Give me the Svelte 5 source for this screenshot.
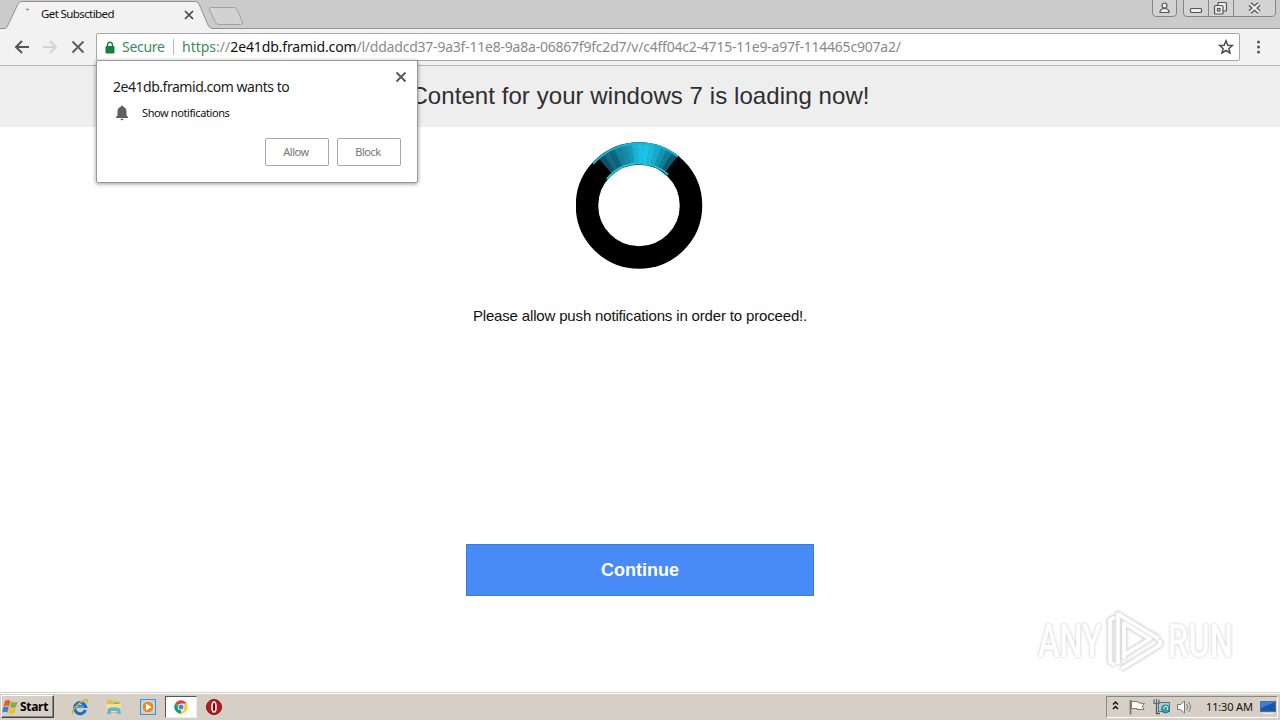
<script>
  const site = '2e41db.framid.com';
  const path = '/l/ddadcd37-9a3f-11e8-9a8a-06867f9fc2d7/v/c4ff04c2-4715-11e9-a97f-114465c907a2/';

  let popupOpen = true;

  // Lit part of the spinner, from left to right (degrees from the top)
  const shades = ['#0d5266', '#126b82', '#0f6279', '#14809b', '#168ba9', '#1796b5', '#1cb0d3', '#1ebde3', '#1cc4ea', '#1bb9df', '#18a9cb', '#1494b3', '#107c96', '#0b5a70'];
  const start = -41;
  const step = 5.6;

  function point(r, deg) {
    const a = (deg * Math.PI) / 180;
    return `${(63.5 + r * Math.sin(a)).toFixed(2)} ${(63.5 - r * Math.cos(a)).toFixed(2)}`;
  }

  function segment(i) {
    const a = start + i * step;
    const b = a + step + 0.4;
    return `M${point(62.5, a)} L${point(62.5, b)} L${point(42, b)} L${point(42, a)}Z`;
  }
</script>

<div class="screen">
  <header class="tabstrip">
    <svg class="tabs" width="260" height="29" viewBox="0 0 260 29">
      <path d="M0 28.5H5Q7 28 8 25L18 4Q19.500 1.500 22 1.500H195Q198 1.500 199 4L208 25Q209.500 28.500 212 28.500H260" fill="#f2f2f2" stroke="#929292" />
      <path d="M6 29H211" stroke="#f2f2f2" stroke-width="2" />
      <path d="M210.500 7.500H234Q236 7.500 237 9.500L242.500 22Q243 24.500 240.500 24.500H219Q216.500 24.500 215.500 22.500L209.500 10Q208.500 7.500 210.500 7.500Z" fill="#d2d2d2" stroke="#a0a0a0" />
      <path d="M26 9.500h3" stroke="#8c8c8c" stroke-width="1.500" />
      <path d="M185 11l8 8M193 11l-8 8" stroke="#454545" stroke-width="1.700" />
    </svg>
    <span class="tab-title">Get Subsctibed</span>
    <svg class="window-buttons" width="128" height="18" viewBox="0 0 128 18" fill="none" stroke="#858585">
      <path d="M.5 -2V13Q.5 16.500 4 16.500H20Q24.500 16.500 24.500 13V-2M31.500 -2V13Q31.500 16.500 35 16.500H119Q123.500 16.500 123.500 13V-2" fill="#d3d3d3" />
      <path d="M56.500 0V16M81.500 0V16" />
      <g stroke="#555" stroke-width="1.200">
        <circle cx="12.500" cy="5.500" r="2.500" fill="#eee" />
        <path d="M8 12.500Q8 8.500 12.500 8.500T17 12.500Z" fill="#eee" />
        <rect x="38.500" y="8.500" width="11" height="4" rx="1" fill="#eee" />
        <rect x="66" y="2.500" width="8.500" height="8.500" rx="1" fill="#eee" />
        <rect x="62.500" y="5.500" width="8.500" height="8.500" rx="1" fill="#eee" />
        <rect x="65.500" y="8.500" width="2.500" height="2.500" />
      </g>
      <path d="M98 4l9 8M107 4l-9 8" stroke="#555" stroke-width="4.500" />
      <path d="M98 4l9 8M107 4l-9 8" stroke="#eee" stroke-width="2.300" />
    </svg>
  </header>

  <nav class="toolbar">
    <svg class="nav-icons" width="96" height="36" viewBox="0 0 96 36" fill="none" stroke-width="2">
      <path d="M29 18H16M22 12l-6 6 6 6" stroke="#555" />
      <path d="M43 18H56M50 12l6 6-6 6" stroke="#d3d3d3" />
      <path d="M72.500 12.500l11 11M83.500 12.500l-11 11" stroke="#5c5c5c" stroke-width="1.800" />
    </svg>
    <div class="omnibox">
      <svg class="lock" width="10" height="13" viewBox="0 0 10 13">
        <path d="M2.500 6V4a2.500 2.800 0 0 1 5 0V6" fill="none" stroke="#15803c" stroke-width="1.400" />
        <rect x=".5" y="5" width="9" height="7.500" rx="1" fill="#15803c" />
      </svg>
      <span class="secure">Secure</span>
      <span class="divider"></span>
      <span class="url"><span class="scheme"><span class="green">https</span>://</span><span class="host">{site}</span><span class="path">{path}</span></span>
      <svg class="star" width="16" height="16" viewBox="0 0 16 16">
        <path d="M8 1.800L9.800 6.200 14.400 6.500 10.900 9.500 12 14 8 11.500 4 14 5.100 9.500 1.600 6.500 6.200 6.200Z" fill="none" stroke="#4a4a4a" stroke-width="1.500" />
      </svg>
    </div>
    <svg class="menu" width="40" height="36" viewBox="0 0 40 36" fill="#555">
      <circle cx="18.500" cy="13" r="1.500" />
      <circle cx="18.500" cy="18" r="1.500" />
      <circle cx="18.500" cy="23" r="1.500" />
    </svg>
  </nav>

  <main class="page">
    <h1>Content for your windows 7 is loading now!</h1>
    <svg class="spinner" width="127" height="127" viewBox="0 0 127 127">
      <circle cx="63" cy="63.500" r="52" fill="none" stroke="#000" stroke-width="22.500" />
      {#each shades as shade, i}
        <path d={segment(i)} fill={shade} />
      {/each}
      <path d={`M${point(62.3, -48)} A62.300 62.300 0 0 1 ${point(62.3, 38)}`} fill="none" stroke="#18b4d0" stroke-width="2" />
      <path d={`M${point(42, -51)} A42 42 0 0 1 ${point(42, 43)}`} fill="none" stroke="#18c2d8" stroke-width="2" />
    </svg>
    <p class="hint">Please allow push notifications in order to proceed!.</p>
    <button class="continue">Continue</button>

    <div class="watermark">
      <span>ANY</span>
      <svg width="58" height="64" viewBox="0 0 58 64" fill="none" stroke-linejoin="round">
        <g stroke="#e4e4e4" stroke-width="5.500">
          <path d="M9 8L4 11V53L9 56" />
          <path d="M12 55V5L53 30" />
          <path d="M18 50V14L44 30L18 46M15 60L54 36V31" />
        </g>
        <g stroke="#fff" stroke-width="3.500">
          <path d="M9 8L4 11V53L9 56" />
          <path d="M12 55V5L53 30" />
          <path d="M18 50V14L44 30L18 46M15 60L54 36V31" />
        </g>
      </svg>
      <span>RUN</span>
    </div>
  </main>

  {#if popupOpen}
    <div class="popup">
      <button class="close" aria-label="Close" on:click={() => (popupOpen = false)}>
        <svg width="12" height="12" viewBox="0 0 12 12">
          <path d="M1.500 1.500l9 9M10.500 1.500l-9 9" stroke="#5a5a5a" stroke-width="2" />
        </svg>
      </button>
      <div class="popup-title">{site} wants to</div>
      <div class="permission">
        <svg width="14" height="16" viewBox="0 0 14 16" fill="#5f5f5f">
          <path d="M7 .5a1.200 1.200 0 0 0-1.200 1.300C3.500 2.500 2.500 4.300 2.500 6.500V10.500L1 12V13H13V12L11.500 10.500V6.500C11.500 4.300 10.500 2.500 8.200 1.800A1.200 1.200 0 0 0 7 .5ZM5.500 13.800a1.500 1.500 0 0 0 3 0Z" />
        </svg>
        <span>Show notifications</span>
      </div>
      <div class="popup-actions">
        <button on:click={() => (popupOpen = false)}>Allow</button>
        <button on:click={() => (popupOpen = false)}>Block</button>
      </div>
    </div>
  {/if}

  <footer class="taskbar">
    <button class="start">
      <svg width="17" height="16" viewBox="0 0 17 16">
        <path d="M3 2Q6 0 8.500 2L7 7.500Q4.500 5.500 1.500 7.300Z" fill="#e65b2c" />
        <path d="M9.500 2.500Q12.500 4.500 15.500 2.500L14 8Q11 10 8 8Z" fill="#7eb43d" />
        <path d="M1.300 8.300Q4 6.700 6.700 8.500L5.300 13.500Q3 12 0 13.500Z" fill="#3a7fcc" />
        <path d="M7.700 9Q10.500 11 13.700 9L12.300 14Q9 16 6.300 14Z" fill="#f5bd28" />
      </svg>
      <span>Start</span>
    </button>
    <div class="apps">
      <span class="app">
        <svg width="18" height="18" viewBox="0 0 18 18" fill="none">
          <path d="M14.500 12A5.600 5.600 0 1 1 14.600 8.500H5" stroke="#1671c8" stroke-width="3" />
          <path d="M4.500 8.800H13" stroke="#52b7f0" stroke-width="1.500" />
          <path d="M2 16C-.5 13 8 4 14 2Q17.500 1 16 5" stroke="#e3ad25" stroke-width="1.500" />
        </svg>
      </span>
      <span class="app">
        <svg width="18" height="18" viewBox="0 0 18 18">
          <path d="M2 2H7L8 3.500H15V15H2Z" fill="#e2bd50" />
          <path d="M9 4.500H14V7H9Z" fill="#79bd69" />
          <path d="M1.500 6H16V14H1.500Z" fill="#f6e08a" />
          <path d="M3 10.500Q9 8 15 10.500L16 16H12V13H6V16H2Z" fill="#62b3df" />
        </svg>
      </span>
      <span class="app">
        <svg width="18" height="18" viewBox="0 0 18 18">
          <rect x="1.500" y="1.500" width="15" height="15" fill="#a9d4f4" stroke="#4b91c8" />
          <circle cx="9" cy="9" r="6" fill="#f18a1d" stroke="#fff" stroke-width=".6" />
          <path d="M7 5.500L12.500 9L7 12.500Z" fill="#fff" />
        </svg>
      </span>
      <span class="app active">
        <svg width="16" height="16" viewBox="0 0 16 16">
          <path d="M8 8L2.200 4.700A6.700 6.700 0 0 1 13.800 4.700H8Z" fill="#dd4437" />
          <path d="M8 8L8.500 14.700A6.700 6.700 0 0 1 2.200 4.700Z" fill="#1b9d58" />
          <path d="M8 4.700H13.800A6.700 6.700 0 0 1 8 14.700L11 9.500Z" fill="#fbcb3c" />
          <circle cx="8" cy="8" r="3.300" fill="#fff" />
          <circle cx="8" cy="8" r="2.500" fill="#4285f4" />
        </svg>
      </span>
      <span class="app">
        <svg width="18" height="18" viewBox="0 0 18 18">
          <circle cx="9" cy="9" r="7.500" fill="#b61a1a" stroke="#841010" />
          <ellipse cx="9" cy="9" rx="2" ry="5" fill="#7c0808" stroke="#fff" stroke-width="1.600" />
        </svg>
      </span>
    </div>
    <div class="tray">
      <svg width="94" height="20" viewBox="0 0 94 20" fill="none">
        <path d="M6 7.500L8.500 5L11 7.500M6 12L8.500 9.500L11 12" stroke="#111" stroke-width="1.500" />
        <g stroke="#777">
          <path d="M23.500 3V17.500" stroke-width="1.800" />
          <path d="M24.500 4.500H30Q31 6.500 37.500 6.500L35 9L37 12.500H30V11.500H24.500Z" fill="#fff" />
        </g>
        <rect x="51.500" y="5.500" width="11" height="9" fill="#a4cfd8" stroke="#547783" />
        <path d="M49.500 7V16.500H53" stroke="#555" stroke-width="1.300" />
        <path d="M47 2.500V6.500H52V2.500M49.500 2V9" stroke="#666" stroke-width="1.200" />
        <circle cx="58.500" cy="12" r="4" fill="#3e9ea8" stroke="#287780" />
        <path d="M56 12l2-3 3 1-1 3" stroke="#c9edd2" />
        <g stroke="#777">
          <path d="M70.500 7.500H73.500L77.500 4V16L73.500 12.500H70.500Z" fill="#fff" />
          <path d="M79.500 7Q82 10 79.500 13M81.500 5Q85.500 10 81.500 15" />
        </g>
      </svg>
      <span class="clock">11:30 AM</span>
      <svg width="16" height="16" viewBox="0 0 16 16">
        <rect x=".5" y="2.500" width="15" height="10" fill="#1c54ad" stroke="#4a7294" />
        <path d="M1 3H15L1 9Z" fill="#3d7fd2" />
        <path d="M3 14.500H13" stroke="#eee" stroke-width="1" />
      </svg>
    </div>
  </footer>
</div>

<style>
  :global(body) {
    margin: 0;
    overflow: hidden;
  }

  .screen {
    position: relative;
    width: 1280px;
    height: 720px;
    display: flex;
    flex-direction: column;
    background: #fff;
    font-family: "Noto Sans", sans-serif;
    color: #222;
  }

  svg {
    display: block;
    flex: none;
  }

  button {
    font-family: inherit;
    padding: 0;
    box-sizing: border-box;
  }

  .tabstrip {
    position: relative;
    height: 29px;
    box-sizing: border-box;
    display: flex;
    justify-content: space-between;
    background: #cbcbcb;
    border-bottom: 1px solid #929292;
  }

  .tab-title {
    position: absolute;
    left: 41px;
    top: 6px;
    font-size: 11.5px;
    line-height: 16px;
    letter-spacing: -0.6px;
    color: #111;
    white-space: nowrap;
  }

  .toolbar {
    height: 37px;
    box-sizing: border-box;
    display: flex;
    background: #f2f2f2;
    border-bottom: 1px solid #b3b3b3;
  }

  .omnibox {
    flex: 1;
    height: 28px;
    margin-top: 4px;
    box-sizing: border-box;
    display: flex;
    align-items: center;
    padding: 0 5px 0 8px;
    background: #fff;
    border: 1px solid #a8a8a8;
    border-radius: 2px;
    font-size: 14px;
    white-space: nowrap;
  }

  .secure {
    width: 42px;
    margin-left: 7px;
    padding-bottom: 2px;
    color: #3b8b5e;
    letter-spacing: -0.3px;
  }

  .divider {
    width: 1px;
    height: 16px;
    margin: 0 8px 0 9px;
    background: #bbb;
  }

  .url {
    flex: 1;
    padding-bottom: 2px;
  }

  .scheme {
    color: #8a8a8a;
  }

  .path {
    color: #8a8a8a;
    letter-spacing: -0.22px;
  }

  .green {
    color: #3b8b5e;
  }

  .host {
    color: #111;
    letter-spacing: -0.13px;
  }

  .page {
    position: relative;
    flex: 1;
    display: flex;
    flex-direction: column;
    align-items: center;
    font-family: "Liberation Sans", Arial, sans-serif;
  }

  h1 {
    align-self: stretch;
    height: 61px;
    margin: 0;
    background: #eee;
    color: #2e2e2e;
    font-size: 24px;
    font-weight: normal;
    line-height: 60px;
    letter-spacing: 0.07px;
    text-align: center;
  }

  .spinner {
    margin: 15px 2px 0 0;
  }

  .hint {
    margin: 38px 0 0;
    font-size: 15px;
    line-height: 18px;
    letter-spacing: -0.16px;
    color: #111;
  }

  .continue {
    width: 348px;
    height: 52px;
    margin-top: 219px;
    border: 1px solid #3c7bd5;
    background: #488bf7;
    color: #fff;
    font-size: 18px;
    font-weight: bold;
  }

  .watermark {
    position: absolute;
    left: 1038px;
    top: 543px;
    display: flex;
    align-items: center;
    gap: 4px;
    font-family: Roboto, sans-serif;
    font-size: 47px;
    font-weight: 500;
    line-height: 64px;
    color: #fff;
    filter: drop-shadow(0 0 1.5px #c4c4c4);
  }

  .watermark span {
    width: 64px;
    transform: scaleX(0.69);
    transform-origin: left;
  }

  .popup {
    position: absolute;
    left: 96px;
    top: 60px;
    width: 322px;
    height: 123px;
    box-sizing: border-box;
    padding: 16px 16px 16px;
    display: flex;
    flex-direction: column;
    background: #fff;
    border: 1px solid #999;
    border-radius: 2px;
    box-shadow: 0 1px 4px rgba(0, 0, 0, 0.4);
  }

  .close {
    position: absolute;
    right: 10px;
    top: 10px;
    border: none;
    background: none;
  }

  .popup-title {
    font-size: 14px;
    line-height: 19px;
    letter-spacing: -0.47px;
    white-space: nowrap;
  }

  .permission {
    display: flex;
    align-items: center;
    gap: 13px;
    height: 16px;
    margin: 9px 0 0 2px;
    font-size: 11px;
    letter-spacing: -0.4px;
    color: #111;
  }

  .permission span {
    padding-bottom: 2px;
  }

  .popup-actions {
    display: flex;
    justify-content: flex-end;
    gap: 8px;
    margin-top: 17px;
  }

  .popup-actions button {
    width: 64px;
    height: 28px;
    padding: 0 2px 2px 0;
    border: 1px solid #a8a8a8;
    border-radius: 2px;
    background: #fff;
    color: #757575;
    font-size: 11px;
    letter-spacing: -0.5px;
  }

  .taskbar {
    height: 28px;
    box-sizing: border-box;
    display: flex;
    align-items: center;
    padding: 0 2px 0 1px;
    background: #d5cfc6;
    border-top: 1px solid #d5cfc6;
    box-shadow: inset 0 1px #fff;
  }

  .start {
    width: 53px;
    height: 23px;
    display: flex;
    align-items: center;
    gap: 1px;
    border: 1px solid;
    border-color: #fff #444 #444 #fff;
    background: #d5cfc6;
    box-shadow: inset -1px -1px #8c8982;
    font-size: 12px;
    font-weight: bold;
    letter-spacing: -0.3px;
    color: #000;
  }

  .start span {
    padding-bottom: 1px;
  }

  .apps {
    flex: 1;
    display: flex;
    margin-left: 9px;
  }

  .app {
    width: 34px;
    height: 22px;
    display: flex;
    align-items: center;
    justify-content: center;
  }

  .active {
    box-sizing: border-box;
    width: 32px;
    background: #fff;
    border: 1px solid;
    border-color: #555 #eee #eee #555;
  }

  .tray {
    width: 172px;
    height: 22px;
    box-sizing: border-box;
    display: flex;
    align-items: center;
    border: 1px solid;
    border-color: #8c8982 #fff #fff #8c8982;
  }

  .clock {
    width: 47px;
    margin: 0 7px 0 5px;
    font-size: 11px;
    letter-spacing: -0.15px;
    white-space: nowrap;
    color: #111;
  }
</style>
